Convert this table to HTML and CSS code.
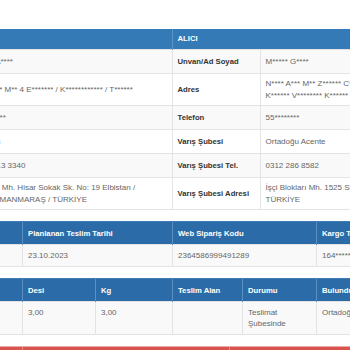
FILE: index.html
```html
<!DOCTYPE html>
<html lang="tr">
<head>
<meta charset="utf-8">
<title>Gönderi Detayı</title>
<link rel="stylesheet" href="styles.css">
</head>
<body>
<div class="page">
  <table class="info">
    <colgroup>
      <col class="c-label">
      <col class="c-value-left">
      <col class="c-label">
      <col>
    </colgroup>
    <thead>
      <tr>
        <th colspan="2">GÖNDERİCİ</th>
        <th colspan="2" class="split">ALICI</th>
      </tr>
    </thead>
    <tbody>
      <tr>
        <td class="lbl">Unvan/Ad Soyad</td>
        <td>H***** A****</td>
        <td class="lbl split">Unvan/Ad Soyad</td>
        <td class="val">M***** G****</td>
      </tr>
      <tr>
        <td class="lbl">Adres</td>
        <td>B******** M** 4 E******* / K************ / T******</td>
        <td class="lbl split">Adres</td>
        <td class="val">N**** A*** M** Z****** C****** N* 12 D* 4<br>K****** V******** K****** K****** / T******</td>
      </tr>
      <tr>
        <td class="lbl">Telefon</td>
        <td>54********</td>
        <td class="lbl split">Telefon</td>
        <td class="val">55********</td>
      </tr>
      <tr>
        <td class="lbl">Çıkış Şubesi</td>
        <td>Elbistan</td>
        <td class="lbl split">Varış Şubesi</td>
        <td class="val">Ortadoğu Acente</td>
      </tr>
      <tr>
        <td class="lbl">Çıkış Şubesi Tel.</td>
        <td>0344 413 3340</td>
        <td class="lbl split">Varış Şubesi Tel.</td>
        <td class="val">0312 286 8582</td>
      </tr>
      <tr>
        <td class="lbl">Çıkış Şubesi Adresi</td>
        <td>Kümbet Mh. Hisar Sokak Sk. No: 19 Elbistan / KAHRAMANMARAŞ / TÜRKİYE</td>
        <td class="lbl split">Varış Şubesi Adresi</td>
        <td class="val">İşçi Blokları Mh. 1525 Sk. No: 6 Çankaya / ANKARA / TÜRKİYE</td>
      </tr>
    </tbody>
  </table>

  <table class="grid">
    <colgroup>
      <col class="g-first">
      <col class="g-plan">
      <col class="g-web">
      <col>
    </colgroup>
    <thead>
      <tr>
        <th>Gönderi Tarihi</th>
        <th>Planlanan Teslim Tarihi</th>
        <th>Web Sipariş Kodu</th>
        <th>Kargo Takip No</th>
      </tr>
    </thead>
    <tbody>
      <tr>
        <td>20.10.2023</td>
        <td>23.10.2023</td>
        <td>2364586999491289</td>
        <td>164*********</td>
      </tr>
    </tbody>
  </table>

  <table class="grid">
    <colgroup>
      <col class="g-first">
      <col class="g-desi">
      <col class="g-kg">
      <col class="g-alan">
      <col class="g-durum">
      <col>
    </colgroup>
    <thead>
      <tr>
        <th>Ürün</th>
        <th>Desi</th>
        <th>Kg</th>
        <th>Teslim Alan</th>
        <th>Durumu</th>
        <th>Bulunduğu Şube</th>
      </tr>
    </thead>
    <tbody>
      <tr>
        <td>Koli</td>
        <td>3,00</td>
        <td>3,00</td>
        <td></td>
        <td>Teslimat Şubesinde</td>
        <td>Ortadoğu Acente</td>
      </tr>
    </tbody>
  </table>

  <table class="grid danger">
    <colgroup>
      <col class="g-first">
      <col class="g-islem">
      <col>
    </colgroup>
    <thead>
      <tr>
        <th>Tarih</th>
        <th>Şube</th>
        <th>İşlem</th>
      </tr>
    </thead>
  </table>
</div>
</body>
</html>
```

FILE: styles.css
```css
html, body {
  margin: 0;
  padding: 0;
  background: #ffffff;
}

body {
  overflow: hidden;
  font-family: "Liberation Sans", Arial, sans-serif;
  font-size: 8px;
  color: #666666;
}

.page {
  width: 600px;
  margin-left: -121px;
  padding-top: 29px;
}

table {
  width: 100%;
  border-collapse: collapse;
  table-layout: fixed;
  margin-bottom: 11px;
}

th {
  text-align: left;
  font-weight: bold;
  font-size: 7.7px;
  color: #ffffff;
  white-space: nowrap;
  overflow: hidden;
}

/* ---------- sender / receiver table ---------- */
.c-label { width: 88px; }
.c-value-left { width: 205px; }

.info th {
  background: #337ab7;
  padding: 4px 5px 5px;
  line-height: 11px;
}

.info th.split {
  border-left: 1px solid #5b95c8;
}

.info tbody tr {
  height: 24px;
}

.info td {
  padding: 4px 5px;
  line-height: 11.5px;
  border-top: 1px solid #e3e3e3;
  vertical-align: middle;
}

.info tbody tr:nth-child(odd) td {
  background: #f9f9f9;
}

.info tbody tr:last-child td {
  border-bottom: 1px solid #e3e3e3;
}

.info td.lbl {
  font-weight: bold;
  font-size: 7.7px;
  color: #333333;
  white-space: nowrap;
  overflow: hidden;
}

.info td.split,
.info td.val {
  border-left: 1px solid #e3e3e3;
}

/* ---------- bordered grids ---------- */
.g-first { width: 143px; }
.g-plan { width: 150px; }
.g-web { width: 144px; }
.g-desi { width: 73px; }
.g-kg { width: 77px; }
.g-alan { width: 70px; }
.g-durum { width: 74px; }
.g-islem { width: 207px; }

.grid th {
  background: #2b6ca8;
  padding: 6px 5px 5px;
  line-height: 11px;
  border-left: 1px solid #5a8fc2;
  border-top: 1px solid #3f7cb5;
}

.grid td {
  padding: 5px;
  line-height: 11px;
  vertical-align: top;
  background: #f9f9f9;
  border: 1px solid #e3e3e3;
}

.grid.danger th {
  background: #d9534f;
  border-left: 1px solid #e48784;
  border-top: 1px solid #eba9a7;
}
```
